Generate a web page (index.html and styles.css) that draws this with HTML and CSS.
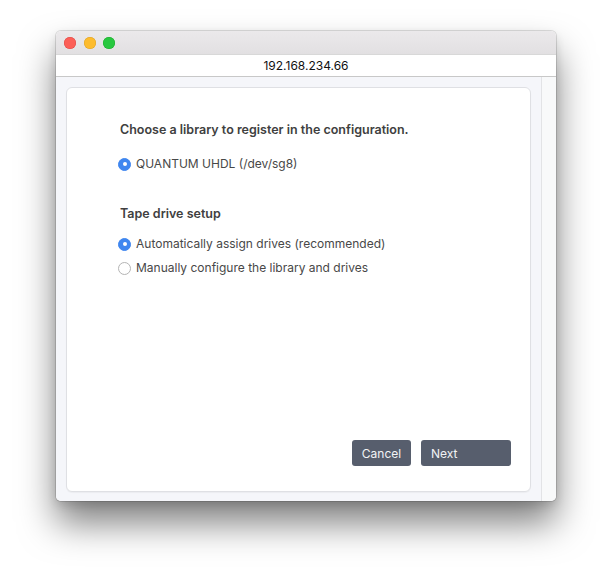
FILE: index.html
```html
<!DOCTYPE html>
<html>
<head>
<meta charset="utf-8">
<link rel="stylesheet" href="styles.css">
</head>
<body>
<div class="window">
  <div class="titlebar">
    <span class="light red"></span>
    <span class="light yellow"></span>
    <span class="light green"></span>
  </div>
  <div class="urlbar">192.168.234.66</div>
  <div class="main">
    <div class="content">
      <div class="card">
        <h2 class="heading">Choose a library to register in the configuration.</h2>
        <label class="radio-row first"><span class="radio checked"></span>QUANTUM UHDL (/dev/sg8)</label>
        <h2 class="heading section">Tape drive setup</h2>
        <label class="radio-row"><span class="radio checked"></span>Automatically assign drives (recommended)</label>
        <label class="radio-row"><span class="radio"></span>Manually configure the library and drives</label>
        <div class="actions">
          <button class="btn cancel">Cancel</button>
          <button class="btn next">Next</button>
        </div>
      </div>
    </div>
    <div class="scrolltrack"></div>
  </div>
</div>
</body>
</html>
```
FILE: styles.css
```css
html, body {
  margin: 0;
  padding: 0;
  background: #ffffff;
}
body {
  padding: 31px 0 0 56px;
  min-height: 582px;
  box-sizing: border-box;
  font-family: Inter, "Noto Sans", sans-serif;
}
.window {
  width: 500px;
  height: 470px;
  border-radius: 5px;
  overflow: hidden;
  display: flex;
  flex-direction: column;
  box-shadow: 0 0 0 1px rgba(0,0,0,0.12), 0 22px 36px rgba(0,0,0,0.5), 0 4px 10px rgba(0,0,0,0.12);
}
.titlebar {
  height: 23px;
  background: linear-gradient(#ebe9eb, #e2e0e2);
  display: flex;
  align-items: center;
  padding-left: 8px;
  gap: 7.5px;
  flex-shrink: 0;
}
.light {
  width: 12px;
  height: 12px;
  border-radius: 50%;
  display: block;
}
.red { background: #fc5f57; box-shadow: inset 0 0 0 0.5px #df4744; }
.yellow { background: #fdbc2e; box-shadow: inset 0 0 0 0.5px #dea123; }
.green { background: #28c840; box-shadow: inset 0 0 0 0.5px #1aab29; }
.urlbar {
  background: #ffffff;
  border-top: 1px solid #d8d8d8;
  border-bottom: 1px solid #c8c8c8;
  box-sizing: border-box;
  height: 23px;
  font-size: 12px;
  color: #111;
  display: flex;
  align-items: center;
  justify-content: center;
  flex-shrink: 0;
}
.main {
  flex: 1;
  display: flex;
  min-height: 0;
}
.content {
  flex: 1;
  background: #f5f6fa;
  padding: 10px 10px 9px 10px;
  display: flex;
}
.scrolltrack {
  width: 14px;
  background: #f8f9fa;
  border-left: 1px solid #e2e3e6;
}
.card {
  flex: 1;
  background: #ffffff;
  border: 1px solid #dfe0e4;
  border-radius: 6px;
  padding: 34px 19px 25px 53px;
  display: flex;
  flex-direction: column;
  box-shadow: 0 1px 1px rgba(0,0,0,0.04);
}
.heading {
  margin: 0;
  font-size: 12.5px;
  line-height: 16px;
  font-weight: 600;
  color: #404040;
}
.section {
  margin-top: 30px;
}
.radio-row {
  display: flex;
  align-items: center;
  font-size: 12px;
  line-height: 16px;
  color: #484848;
  height: 24px;
}
.radio-row.first {
  margin-top: 14px;
}
.heading.section + .radio-row {
  margin-top: 10px;
}
.radio {
  width: 13px;
  height: 13px;
  box-sizing: border-box;
  border-radius: 50%;
  border: 1px solid #b4b4b4;
  background: #fff;
  margin-left: -2px;
  margin-right: 5px;
  position: relative;
  flex-shrink: 0;
}
.radio.checked {
  background: #3f86ef;
  border-color: #3f86ef;
}
.radio.checked::after {
  content: "";
  position: absolute;
  width: 4px;
  height: 4px;
  border-radius: 50%;
  background: #fff;
  left: 3.5px;
  top: 3.5px;
}
.actions {
  margin-top: auto;
  display: flex;
  justify-content: flex-end;
  gap: 10px;
}
.btn {
  height: 26px;
  border: none;
  border-radius: 3px;
  background: #575e6d;
  color: #f2f3f5;
  font-family: Inter, "Noto Sans", sans-serif;
  font-size: 12px;
  padding: 0;
}
.cancel {
  width: 59px;
  text-align: center;
}
.next {
  width: 90px;
  text-align: left;
  padding-left: 10px;
}
```
